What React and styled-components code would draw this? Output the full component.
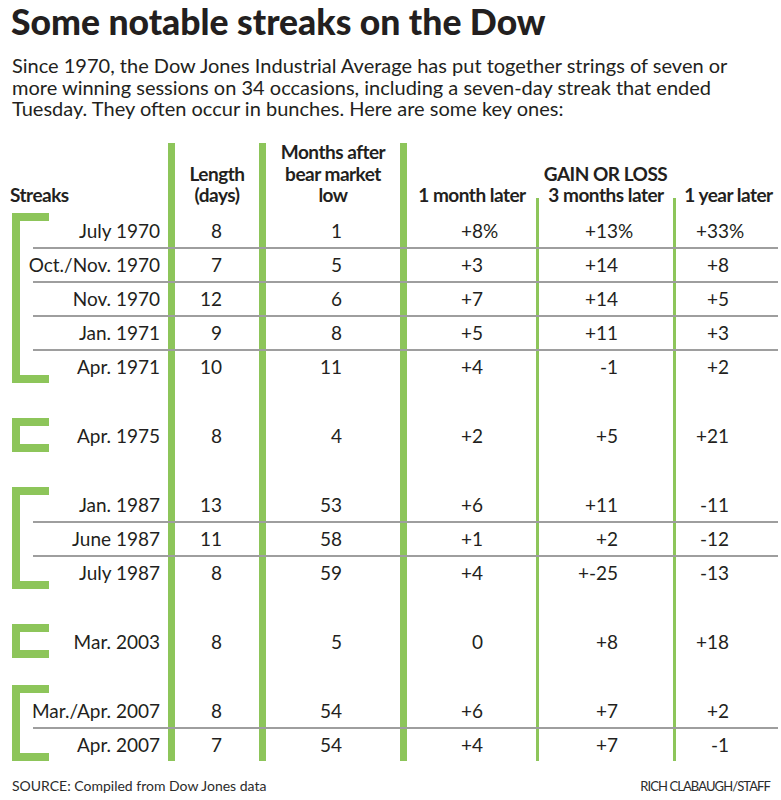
import styled, { createGlobalStyle } from "styled-components"

const GREEN = "#8dc55a"
const INK = "#231f20"

const GlobalStyle = createGlobalStyle`
  html, body {
    margin: 0;
    padding: 0;
    background: #ffffff;
  }
  body {
    font-family: Lato, "Noto Sans", sans-serif;
    color: ${INK};
  }
`

const groups = [
  {
    rows: [
      ["July 1970", "8", "1", ["+8", true], ["+13", true], ["+33", true]],
      ["Oct./Nov. 1970", "7", "5", "+3", "+14", "+8"],
      ["Nov. 1970", "12", "6", "+7", "+14", "+5"],
      ["Jan. 1971", "9", "8", "+5", "+11", "+3"],
      ["Apr. 1971", "10", "11", "+4", "-1", "+2"],
    ],
  },
  { rows: [["Apr. 1975", "8", "4", "+2", "+5", "+21"]] },
  {
    rows: [
      ["Jan. 1987", "13", "53", "+6", "+11", "-11"],
      ["June 1987", "11", "58", "+1", "+2", "-12"],
      ["July 1987", "8", "59", "+4", "+-25", "-13"],
    ],
  },
  { rows: [["Mar. 2003", "8", "5", "0", "+8", "+18"]] },
  {
    lift: true,
    rows: [
      ["Mar./Apr. 2007", "8", "54", "+6", "+7", "+2"],
      ["Apr. 2007", "7", "54", "+4", "+7", "-1"],
    ],
  },
]

// right padding per value column, so the digits line up like the print
const valuePad = [null, 37, 58, 53, 55, 49]

function buildRows() {
  let template = "42px 28px"
  let r = 3
  const placed = groups.map((g, gi) => {
    const start = r
    template += ` repeat(${g.rows.length}, 34px)`
    r += g.rows.length
    if (gi < groups.length - 1) {
      template += " 35px"
      r += 1
    }
    return { ...g, start }
  })
  return { template, placed }
}

export default function App() {
  const { template, placed } = buildRows()

  return (
    <>
      <GlobalStyle />
      <Page>
        <Title>Some notable streaks on the Dow</Title>
        <Intro>
          Since 1970, the Dow Jones Industrial Average has put together strings of seven or
          <br />
          more winning sessions on 34 occasions, including a seven-day streak that ended
          <br />
          Tuesday. They often occur in bunches. Here are some key ones:
        </Intro>

        <Table $rows={template}>
          <Rule $col={2} $from={1} $thick />
          <Rule $col={3} $from={1} $thick />
          <Rule $col={4} $from={1} $thick />
          <Rule $col={5} $from={2} />
          <Rule $col={6} $from={2} />

          <StreaksHead>Streaks</StreaksHead>
          <ColHead $col={2}>
            Length
            <br />
            (days)
          </ColHead>
          <ColHead $col={3}>
            Months after
            <br />
            bear market
            <br />
            low
          </ColHead>
          <GainHead>GAIN OR LOSS</GainHead>
          <SubHead $col={4} $pad={8}>1 month later</SubHead>
          <SubHead $col={5} $pad={3}>3 months later</SubHead>
          <SubHead $col={6} $pad={3}>1 year later</SubHead>

          {placed.map((g, gi) => (
            <Bracket key={`b${gi}`} $row={g.start} $span={g.rows.length} $lift={g.lift} />
          ))}

          {placed.map((g, gi) =>
            g.rows.map((row, ri) => {
              const r = g.start + ri
              const divided = ri > 0
              return row.map((val, ci) => {
                if (ci === 0) {
                  return (
                    <Label key={`${gi}-${ri}-${ci}`} $row={r} $divided={divided}>
                      {val}
                    </Label>
                  )
                }
                const pct = Array.isArray(val)
                const text = pct ? val[0] : val
                return (
                  <Value
                    key={`${gi}-${ri}-${ci}`}
                    $row={r}
                    $col={ci + 1}
                    $pad={valuePad[ci]}
                    $last={ci === 5}
                    $divided={divided}
                  >
                    {text}
                    {pct && <Pct>%</Pct>}
                  </Value>
                )
              })
            })
          )}
        </Table>

        <Footer>
          <Source>SOURCE: Compiled from Dow Jones data</Source>
          <Credit>RICH CLABAUGH/STAFF</Credit>
        </Footer>
      </Page>
    </>
  )
}

const Page = styled.div`
  width: 781px;
  height: 800px;
  box-sizing: border-box;
  padding-top: 2px;
  display: flex;
  flex-direction: column;
  overflow: hidden;
`

const Title = styled.h1`
  margin: 0 0 0 11px;
  font-family: Lato, sans-serif;
  font-weight: 900;
  font-size: 35.5px;
  line-height: 40px;
  letter-spacing: 0;
  color: ${INK};
`

const Intro = styled.p`
  margin: 13px 0 0 12px;
  font-size: 20px;
  line-height: 21.5px;
  font-weight: 400;
  white-space: nowrap;
`

const Table = styled.div`
  margin-top: 23px;
  display: grid;
  grid-template-columns: 168px 91px 141px 136px 137px 1fr;
  grid-template-rows: ${(p) => p.$rows};
`

const Rule = styled.div`
  grid-column: ${(p) => p.$col};
  grid-row: ${(p) => p.$from} / -1;
  justify-self: start;
  width: ${(p) => (p.$thick ? "7px" : "3px")};
  margin-top: ${(p) => (p.$thick ? "0" : "13px")};
  background: ${GREEN};
`

const headText = `
  font-weight: 700;
  font-size: 19px;
  line-height: 21.5px;
  letter-spacing: -0.5px;
  white-space: nowrap;
`

const StreaksHead = styled.div`
  ${headText}
  grid-column: 1;
  grid-row: 1 / 3;
  align-self: end;
  padding: 0 0 7px 10px;
`

const ColHead = styled.div`
  ${headText}
  grid-column: ${(p) => p.$col};
  grid-row: 1 / 3;
  align-self: end;
  text-align: center;
  padding: 0 0 7px 7px;
`

const GainHead = styled.div`
  ${headText}
  grid-column: 4 / 7;
  grid-row: 1;
  align-self: end;
  text-align: center;
  padding-left: 30px;
`

const SubHead = styled.div`
  ${headText}
  grid-column: ${(p) => p.$col};
  grid-row: 2;
  align-self: end;
  text-align: center;
  padding: 0 0 7px ${(p) => p.$pad}px;
`

const Bracket = styled.div`
  grid-column: 1;
  grid-row: ${(p) => p.$row} / span ${(p) => p.$span};
  justify-self: start;
  width: 37px;
  margin-left: 12px;
  margin-top: ${(p) => (p.$lift ? "-8px" : "0")};
  box-sizing: border-box;
  border: 8px solid ${GREEN};
  border-right: 0;
`

const cellText = `
  font-size: 19px;
  line-height: 32px;
  white-space: nowrap;
  display: flex;
  justify-content: flex-end;
  align-items: center;
`

const Label = styled.div`
  ${cellText}
  grid-column: 1;
  grid-row: ${(p) => p.$row};
  margin-left: 33px;
  padding-right: 8px;
  border-top: 2px solid ${(p) => (p.$divided ? "#9e9e9e" : "transparent")};
`

const Value = styled.div`
  ${cellText}
  grid-column: ${(p) => p.$col};
  grid-row: ${(p) => p.$row};
  padding-right: ${(p) => p.$pad}px;
  margin-right: ${(p) => (p.$last ? "3px" : "0")};
  border-top: 2px solid ${(p) => (p.$divided ? "#9e9e9e" : "transparent")};
`

const Pct = styled.span`
  display: inline-block;
  width: 0;
  overflow: visible;
`

const Footer = styled.div`
  margin-top: 16px;
  padding: 0 11px 0 12px;
  display: flex;
  justify-content: space-between;
  align-items: baseline;
`

const Source = styled.span`
  font-size: 14px;
  letter-spacing: 0;
  color: #2b2b2b;
`

const Credit = styled.span`
  font-size: 13px;
  letter-spacing: -0.9px;
  color: #2b2b2b;
`
